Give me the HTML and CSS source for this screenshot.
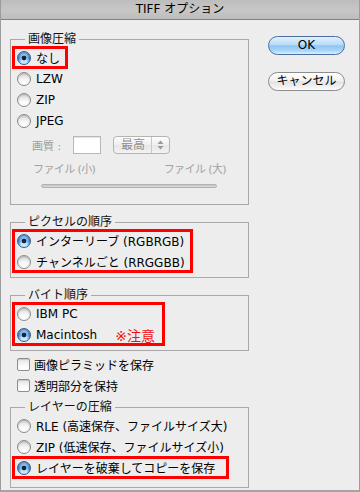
FILE: index.html
```html
<!DOCTYPE html>
<html lang="ja">
<head>
<meta charset="utf-8">
<title>TIFF オプション</title>
<link rel="stylesheet" href="styles.css">
</head>
<body>
<div class="window">
  <div class="titlebar">TIFF オプション</div>
  <div class="content">
    <div class="main">
      <fieldset class="group">
        <legend>画像圧縮</legend>
        <div class="opt mark mark-none"><span class="radio on"></span><span>なし</span></div>
        <div class="opt"><span class="radio"></span><span>LZW</span></div>
        <div class="opt"><span class="radio"></span><span>ZIP</span></div>
        <div class="opt"><span class="radio"></span><span>JPEG</span></div>
        <div class="quality">
          <span class="quality-label">画質 :</span>
          <span class="field"></span>
          <span class="popup"><span class="popup-text">最高</span><span class="popup-arrows"><svg width="7" height="10" viewBox="0 0 7 10"><path d="M3.5 0.5 L6.5 4 H0.5 Z" fill="#9a9a9a"/><path d="M3.5 9.5 L6.5 6 H0.5 Z" fill="#9a9a9a"/></svg></span></span>
        </div>
        <div class="scale"><span>ファイル (小)</span><span>ファイル (大)</span></div>
        <div class="slider"></div>
      </fieldset>

      <fieldset class="group group-gap">
        <legend>ピクセルの順序</legend>
        <div class="mark mark-pixel">
          <div class="opt"><span class="radio on"></span><span>インターリーブ (RGBRGB)</span></div>
          <div class="opt"><span class="radio"></span><span>チャンネルごと (RRGGBB)</span></div>
        </div>
      </fieldset>

      <fieldset class="group group-gap">
        <legend>バイト順序</legend>
        <div class="mark mark-byte">
          <div class="opt"><span class="radio"></span><span>IBM PC</span></div>
          <div class="opt"><span class="radio on"></span><span>Macintosh</span><span class="note">※注意</span></div>
        </div>
      </fieldset>

      <div class="checks">
        <div class="check-row"><span class="check"></span><span>画像ピラミッドを保存</span></div>
        <div class="check-row"><span class="check"></span><span>透明部分を保持</span></div>
      </div>

      <fieldset class="group group-layer">
        <legend>レイヤーの圧縮</legend>
        <div class="opt"><span class="radio"></span><span>RLE (高速保存、ファイルサイズ大)</span></div>
        <div class="opt"><span class="radio"></span><span>ZIP (低速保存、ファイルサイズ小)</span></div>
        <div class="opt mark mark-layer"><span class="radio on"></span><span>レイヤーを破棄してコピーを保存</span></div>
      </fieldset>
    </div>
    <div class="side">
      <button class="btn btn-ok">OK</button>
      <button class="btn btn-cancel">キャンセル</button>
    </div>
  </div>
</div>
</body>
</html>
```

FILE: styles.css
```css
* { box-sizing: border-box; }
html, body { margin: 0; padding: 0; }
body {
  width: 360px;
  height: 492px;
  background: #ececec;
  font-family: "DejaVu Sans", "Noto Sans CJK JP", sans-serif;
  font-size: 12px;
  color: #000;
}
.window {
  width: 360px;
  height: 492px;
  background: #ededed;
  border: 1px solid #9c9c9c;
  border-top: 0;
  border-bottom: 2px solid #a4a4a4;
  display: flex;
  flex-direction: column;
}
.titlebar {
  flex: none;
  height: 20px;
  line-height: 19px;
  text-align: center;
  font-size: 12px;
  background: linear-gradient(#bdbdbd, #c7c7c7 55%, #bcbcbc);
  border-bottom: 1px solid #808080;
}
.content {
  display: flex;
  padding-left: 9px;
  gap: 19px;
}
.main {
  width: 239px;
  padding-top: 11px;
  display: flex;
  flex-direction: column;
}
.side {
  width: 77px;
  padding-top: 16px;
  display: flex;
  flex-direction: column;
  gap: 17px;
}

/* group boxes */
.group {
  margin: 0;
  padding: 0 0 5px 2px;
  border: 1px solid #a9a9a9;
  min-width: 0;
}
.group legend {
  padding: 0 3px;
  margin-left: 12px;
  height: 16px;
  line-height: 16px;
  color: #111;
}
.group-gap { margin-top: 9px; }
.group-layer { margin-top: 3px; padding-bottom: 9px; }

/* options */
.opt {
  display: flex;
  align-items: center;
  height: 21px;
  padding-left: 4px;
  white-space: nowrap;
}
.radio {
  flex: none;
  width: 14px;
  height: 14px;
  margin-right: 5px;
  border-radius: 50%;
  border: 1px solid #8a8a8a;
  background: linear-gradient(#d6d6d6, #f7f7f7 55%, #ffffff);
  box-shadow: inset 0 1px 2px rgba(0, 0, 0, 0.2);
}
.radio.on {
  border-color: #3d5a86;
  background:
    radial-gradient(circle, #13243f 0 2px, transparent 2.7px),
    radial-gradient(ellipse at 50% 95%, #c4e8ff 0 30%, transparent 70%),
    linear-gradient(#86b6e6, #3d87d6 55%, #69b3f2);
  box-shadow: inset 0 1px 1px rgba(0, 0, 0, 0.25);
}
.mark {
  outline: 3px solid #ff0000;
  outline-offset: -2px;
}
.mark-none { width: 54px; }
.mark-pixel { width: 179px; }
.mark-byte { width: 151px; }
.mark-layer { width: 215px; }
.note {
  margin-left: 18px;
  color: #f01010;
  font-size: 14px;
}

/* JPEG quality */
.quality {
  display: flex;
  align-items: center;
  height: 18px;
  margin-top: 5px;
  padding-left: 19px;
  font-size: 11px;
  color: #9c9c9c;
}
.quality-label { width: 41px; }
.field {
  width: 28px;
  height: 18px;
  background: #fff;
  border: 1px solid #b8b8b8;
  box-shadow: inset 0 1px 1px rgba(0, 0, 0, 0.12);
}
.popup {
  display: flex;
  margin-left: 12px;
  width: 57px;
  height: 18px;
  border: 1px solid #b4b4b4;
  border-radius: 4px;
  background: linear-gradient(#fdfdfd, #efefef 50%, #e6e6e6 51%, #f3f3f3);
}
.popup-text {
  flex: 1;
  line-height: 16px;
  padding-left: 7px;
  color: #8f8f8f;
  font-size: 12px;
}
.popup-arrows {
  width: 18px;
  border-left: 1px solid #c8c8c8;
  display: flex;
  align-items: center;
  justify-content: center;
}
.scale {
  display: flex;
  justify-content: space-between;
  margin-top: 9px;
  height: 14px;
  line-height: 14px;
  padding: 0 22px 0 20px;
  font-size: 11px;
  letter-spacing: -0.6px;
  color: #a2a2a2;
}
.slider {
  margin: 7px 0 11px 28px;
  width: 176px;
  height: 4px;
  border-radius: 2px;
  border: 1px solid #b2b2b2;
  background: linear-gradient(#c4c4c4, #dcdcdc);
}

/* checkboxes */
.checks { margin-top: 3px; }
.check-row {
  display: flex;
  align-items: center;
  height: 21px;
  padding-left: 7px;
}
.check {
  flex: none;
  width: 13px;
  height: 13px;
  margin-right: 4px;
  border: 1px solid #8e8e8e;
  border-radius: 2px;
  background: linear-gradient(#e6e6e6, #fafafa 60%, #ffffff);
  box-shadow: inset 0 1px 1px rgba(0, 0, 0, 0.15);
}

/* buttons */
.btn {
  display: block;
  width: 77px;
  height: 19px;
  padding: 0;
  margin: 0;
  border-radius: 10px;
  font: inherit;
  font-size: 12px;
  line-height: 17px;
  color: #000;
  text-align: center;
}
.btn-ok {
  border: 1px solid #4e6f9d;
  background: linear-gradient(#e2f1fd 0%, #b8dbf8 45%, #8fc5f2 52%, #a8d5fa 80%, #d8f0ff 100%);
}
.btn-cancel {
  border: 1px solid #8c8c8c;
  background: linear-gradient(#ffffff 0%, #f2f2f2 45%, #e3e3e3 52%, #f0f0f0 80%, #fbfbfb 100%);
}
```
